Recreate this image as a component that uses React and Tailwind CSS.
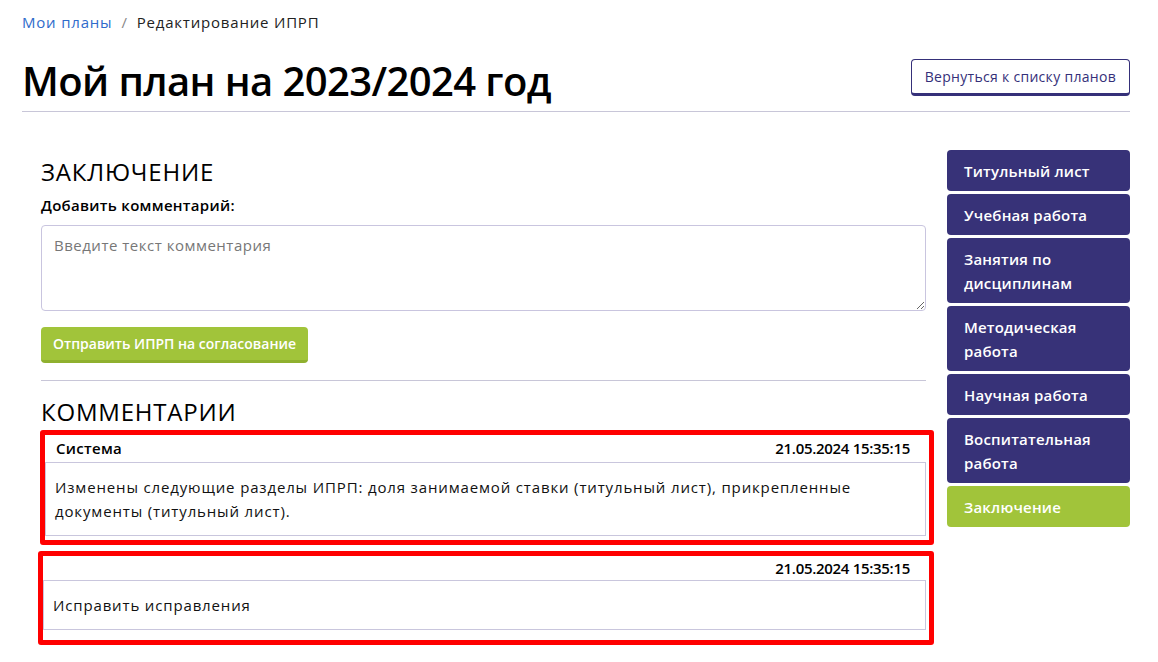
const font = { fontFamily: '"Open Sans", "Noto Sans", sans-serif' };

const navItems = [
  { label: 'Титульный лист' },
  { label: 'Учебная работа' },
  { label: 'Занятия по дисциплинам' },
  { label: 'Методическая работа' },
  { label: 'Научная работа' },
  { label: 'Воспитательная работа' },
  { label: 'Заключение', active: true },
];

const Comment = ({ author, date, children, className, headClass }) => (
  <div className={`border-[5px] border-[#ff0000] rounded-[3px] ${className}`}>
    <div className={`flex justify-between items-center pl-[11px] pr-[19px] text-[15px] font-semibold text-black ${headClass}`}>
      <span className="tracking-[0.3px]">{author}</span>
      <span className="tracking-[-0.3px]">{date}</span>
    </div>
    <div className="border border-[#c9c6dd] mr-[3px] px-[9px] py-[12px] text-[15px] leading-[24px] tracking-[0.85px] text-[#111]">
      {children}
    </div>
  </div>
);

export default function App() {
  return (
    <div className="bg-white min-h-[662px] text-black" style={font}>
      <div className="w-[1108px] ml-[22px]">
        <nav className="pt-[12px] flex items-center gap-[9px] text-[15px] leading-[20px] tracking-[0.8px]">
          <a className="text-[#2f6bcb]">Мои планы</a>
          <span className="text-[#888]">/</span>
          <span className="text-[#222]">Редактирование ИПРП</span>
        </nav>

        <div className="flex justify-between items-center mt-[27px] pb-[8px] border-b border-[#c8c6d8]">
          <h1 className="text-[40px] leading-[44px] font-semibold tracking-[-0.6px]">Мой план на 2023/2024 год</h1>
          <button className="h-[37px] px-[13px] border border-[#353079] border-b-[3px] rounded-[4px] text-[14px] tracking-[0.3px] text-[#353079] -mt-[7px]">
            Вернуться к списку планов
          </button>
        </div>

        <div className="flex gap-[21px] mt-[38px]">
          <main className="flex-1 pl-[19px]">
            <h2 className="text-[24px] leading-[30px] font-normal tracking-[0.8px] mt-[7px]">ЗАКЛЮЧЕНИЕ</h2>
            <label className="block mt-[7px] text-[15px] leading-[22px] font-semibold tracking-[0.3px]">Добавить комментарий:</label>
            <textarea
              className="block w-full h-[86px] mt-[9px] border border-[#c9c5df] rounded-[4px] px-[12px] py-[8px] text-[15px] tracking-[0.5px] placeholder:text-[#777] resize-y outline-none"
              placeholder="Введите текст комментария"
            />
            <button className="mt-[16px] h-[36px] px-[12px] bg-[#a1c43a] border-b-[3px] border-[#8fb02f] rounded-[4px] text-white text-[14px] font-semibold">
              Отправить ИПРП на согласование
            </button>
            <div className="border-t border-[#c8c6d8] mt-[17px]" />
            <h2 className="text-[24px] leading-[30px] font-normal tracking-[0.8px] mt-[16px]">КОММЕНТАРИИ</h2>
            <Comment author="Система" date="21.05.2024 15:35:15" headClass="h-[27px]" className="mt-[3px] -ml-[1px] mr-[-8px] pb-[4px]">
              Изменены следующие разделы ИПРП: доля занимаемой ставки (титульный лист), прикрепленные документы (титульный лист).
            </Comment>
            <Comment author="" date="21.05.2024 15:35:15" headClass="h-[24px]" className="mt-[6px] -ml-[3px] mr-[-8px] pb-[10px]">
              Исправить исправления
            </Comment>
          </main>

          <aside className="w-[183px] flex flex-col gap-[3px]">
            {navItems.map((item) => (
              <div
                key={item.label}
                className={`rounded-[4px] pl-[17px] pr-[10px] pt-[9px] pb-[8px] text-[15px] leading-[24px] font-semibold tracking-[0.2px] text-white ${
                  item.active ? 'bg-[#a1c43a]' : 'bg-[#373278]'
                }`}
              >
                {item.label}
              </div>
            ))}
          </aside>
        </div>
      </div>
    </div>
  );
}
